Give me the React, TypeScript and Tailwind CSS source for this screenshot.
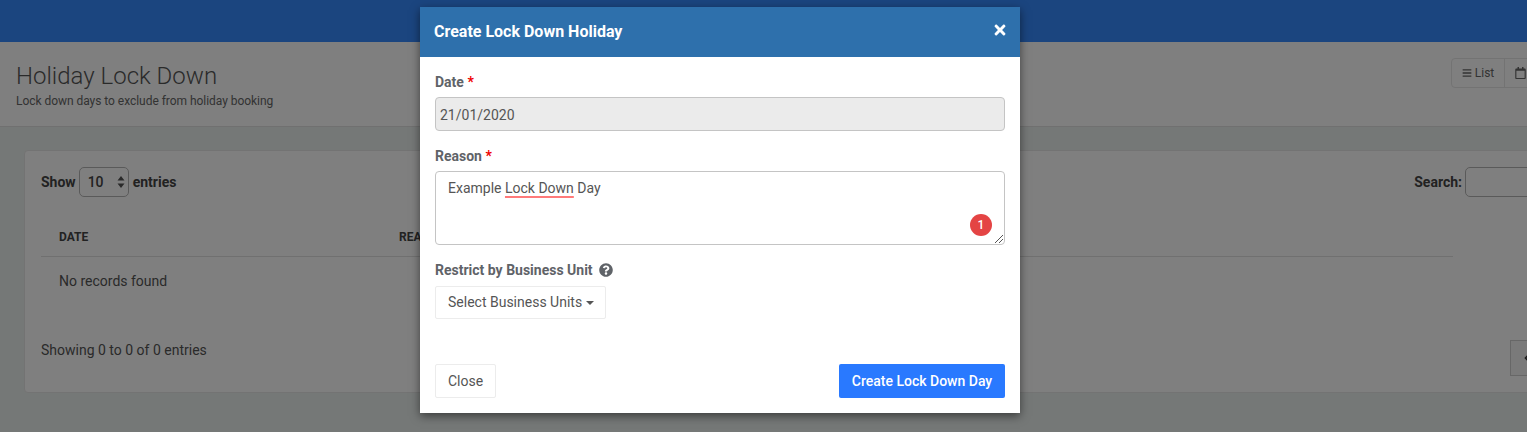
import { FaBars, FaChevronLeft, FaQuestionCircle, FaRegCalendar, FaTimes } from "react-icons/fa";

const Required = () => <span className="text-[#f00000]">*</span>;

const PageBehind = () => (
  <div className="w-[1640px] h-[432px] bg-[#ebf1ee] text-[14px] text-[#555]">
    <div className="h-[42px] bg-[#368aff]" />
    <div className="h-[85px] bg-white border-b border-[#e0e0e0] px-4 pt-[17px] flex justify-between">
      <div>
        <h1 className="text-[24px] leading-[34px] font-light text-[#555]">Holiday Lock Down</h1>
        <p className="text-[12px] leading-[15px] mt-[1px] text-[#666] tracking-[-0.04px]">Lock down days to exclude from holiday booking</p>
      </div>
      <div className="flex h-[30px] -mt-px mr-[38px] border border-[#e6e6e6] rounded-[4px] text-[12px] text-[#666]">
        <div className="w-[53px] flex items-center justify-center gap-[3px] border-r border-[#e6e6e6]">
          <FaBars className="w-[10px] h-[10px]" />
          List
        </div>
        <div className="w-[80px] flex items-center pl-[10px]">
          <FaRegCalendar className="w-[11px] h-[12px]" />
        </div>
      </div>
    </div>
    <div className="ml-6 mt-[23px] w-[1600px] h-[243px] bg-white border border-[#e6e6e6] rounded-[4px] px-4 pt-[16px]">
      <div className="flex items-center justify-between h-[30px] text-[#444] font-bold">
        <div className="flex items-center gap-[3px]">
          Show
          <div className="w-[50px] h-[30px] mr-px border border-[#b5b5b5] rounded-[5px] flex items-center justify-between pl-[8px] pr-[3px] font-medium">
            10
            <svg width="8" height="12" viewBox="0 0 8 12" fill="#555">
              <path d="M4 0 7.5 4.5H.5zM4 12 .5 7.5h7z" />
            </svg>
          </div>
          entries
        </div>
        <div className="flex items-center gap-[3px] mr-[22px]">
          Search:
          <div className="w-[120px] h-[30px] border border-[#b5b5b5] rounded-[5px]" />
        </div>
      </div>
      <div className="w-[1412px] mt-[20px] h-[40px] border-b border-[#e0e0e0] pl-[18px] flex items-center text-[12px] font-bold text-[#444]">
        <div className="w-[340px]">DATE</div>
        <div>REASON</div>
      </div>
      <div className="h-[49px] pl-[18px] flex items-center text-[#555]">No records found</div>
      <div className="flex justify-between items-start mt-[20px]">
        <div className="leading-[30px] mt-[9px]">Showing 0 to 0 of 0 entries</div>
        <div className="w-[60px] h-[36px] mr-[37px] mt-[14px] border border-[#cfcfcf] bg-[#f5f5f5] flex items-center pl-[11px] text-[#333]">
          <FaChevronLeft className="w-[10px] h-[10px]" />
        </div>
      </div>
    </div>
  </div>
);

const Modal = () => (
  <div className="absolute left-[420px] top-[7px] w-[600px] bg-white shadow-[0_3px_9px_rgba(0,0,0,0.5)] text-[14px] text-[#555]">
    <div className="h-[50px] bg-[#2e70ac] px-[14px] flex items-center justify-between text-white">
      <h2 className="text-[16px] font-bold">Create Lock Down Holiday</h2>
      <FaTimes className="w-[12px] h-[16px] mb-[4px]" />
    </div>
    <div className="px-[15px] py-[15px]">
      <div className="leading-[20px] font-bold text-[#5f6368]">
        Date <Required />
      </div>
      <div className="mt-[5px] h-[34px] px-[4px] pt-[2px] flex items-center bg-[#ebebeb] border border-[#c4c4c4] rounded-[4px]">21/01/2020</div>
      <div className="mt-[15px] leading-[20px] font-bold text-[#5f6368]">
        Reason <Required />
      </div>
      <div className="relative mt-[5px] h-[74px] px-[12px] py-[6px] border border-[#c4c4c4] rounded-[4px] leading-[20px]">
        Example <span className="underline decoration-[#ff7a7a] decoration-2 underline-offset-[3px]">Lock Down</span> Day
        <div className="absolute right-[12px] bottom-[8px] w-[22px] h-[22px] rounded-full bg-[#e44444] text-white text-[12px] font-medium flex items-center justify-center">1</div>
        <svg className="absolute right-[1px] bottom-[1px]" width="8" height="8" viewBox="0 0 8 8" stroke="#555" strokeWidth="1">
          <path d="M0 8 8 0M4 8 8 4" />
        </svg>
      </div>
      <div className="mt-[15px] leading-[20px] font-bold text-[#5f6368] flex items-center gap-[6px]">
        Restrict by Business Unit
        <FaQuestionCircle className="w-[14px] h-[14px]" />
      </div>
      <div className="mt-[6px] w-[171px] h-[33px] border border-[#ececec] rounded-[2px] flex items-center pl-[12px] gap-[4px]">
        Select Business Units
        <span className="w-0 h-0 border-x-[4px] border-x-transparent border-t-[4px] border-t-[#555]" />
      </div>
      <div className="mt-[45px] flex justify-between">
        <div className="w-[61px] h-[34px] border border-[#ececec] rounded-[2px] flex items-center justify-center">Close</div>
        <div className="w-[166px] h-[34px] bg-[#2979ff] rounded-[2px] text-white font-medium flex items-center justify-center">Create Lock Down Day</div>
      </div>
    </div>
  </div>
);

export default function App() {
  return (
    <div className="relative w-[1527px] h-[432px] overflow-hidden font-['Roboto',sans-serif]">
      <PageBehind />
      <div className="absolute inset-0 bg-black/50" />
      <Modal />
    </div>
  );
}
